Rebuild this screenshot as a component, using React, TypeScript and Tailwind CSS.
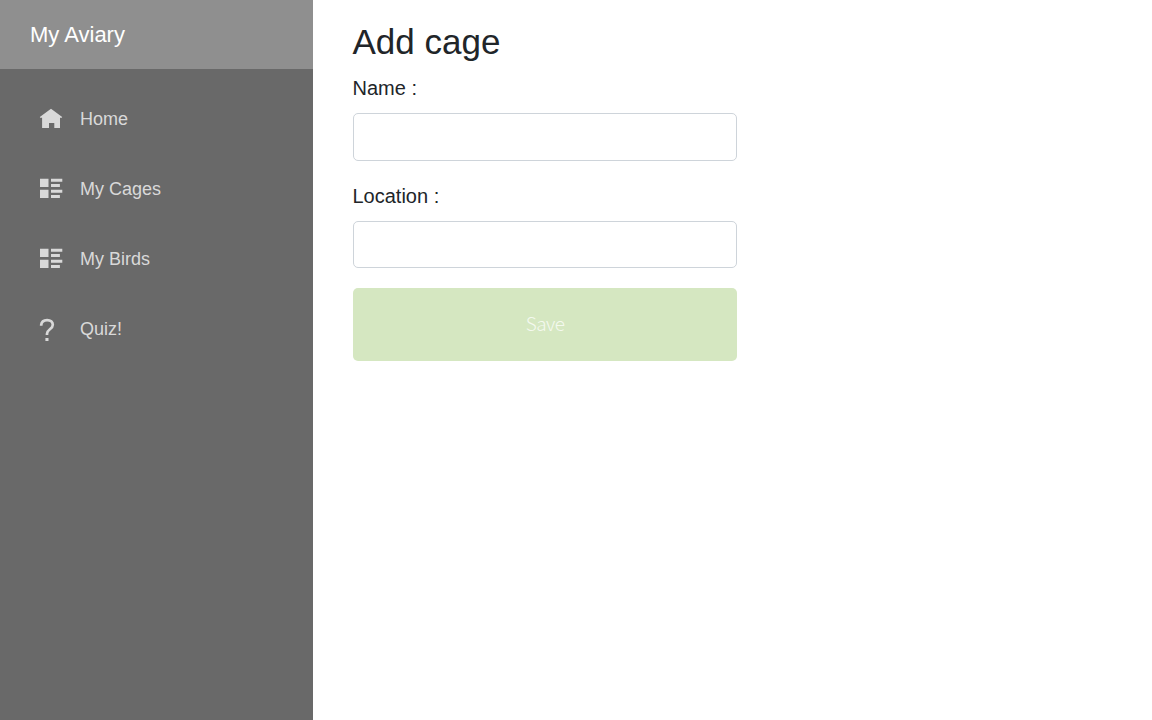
import type { ReactNode } from "react";

function HomeIcon() {
  return (
    <svg width="24" height="24" viewBox="0 0 24 24" fill="currentColor" className="block">
      <path d="M12 1.7 L23.2 9.9 L22.8 10.8 H21 V21 H15.3 V16 H10 V21 H3.1 V10.8 H1.2 L0.8 9.9 Z" />
    </svg>
  );
}

function ListIcon() {
  return (
    <svg width="24" height="24" viewBox="0 0 24 24" fill="currentColor" className="block">
      <path d="M1 1.7H9.5V10H1ZM12 1.7H23.3V4.7H12ZM12 7H20.9V9.9H12ZM1 12.8H9.5V21H1ZM12 12.8H23.3V15.7H12ZM12 18H20.9V21H12Z" />
    </svg>
  );
}

function QuestionIcon() {
  return (
    <svg width="24" height="24" viewBox="0 0 24 24" className="block">
      <path
        d="M2.2 8.8V8C2.5 4.9 4.7 3.1 8.1 3.1C11.6 3.1 13.8 5 13.8 7.8C13.8 9.8 12.6 11 10.9 12.3C9 13.8 8 14.8 8 16.7V17.9"
        fill="none"
        stroke="currentColor"
        strokeWidth="2.7"
      />
      <path d="M6.4 21H9.5V24H6.4Z" fill="currentColor" />
    </svg>
  );
}

function NavItem({ icon, label }: { icon: ReactNode; label: string }) {
  return (
    <a className="flex h-[70px] items-center pl-[39px] text-[18px] text-[#d9d9d9]">
      <span className="mr-[17px] w-6">{icon}</span>
      <span>{label}</span>
    </a>
  );
}

function Field({ label, id, box }: { label: string; id: string; box: string }) {
  return (
    <div className="flex flex-col">
      <label htmlFor={id} className="-ml-[0.5px] mb-[10px] text-[20px] leading-[30px]">
        {label}
      </label>
      <input id={id} className={`${box} w-full rounded-[5px] border border-[#ced4da] bg-white px-4 outline-none`} />
    </div>
  );
}

export default function App() {
  return (
    <div className="flex h-screen overflow-hidden bg-white font-['Liberation_Sans',Arial,sans-serif] text-[#212529]">
      <aside className="w-[313px] shrink-0 bg-[#696969]">
        <div className="flex h-[69px] items-center bg-[#8f8f8f] pl-[30px] text-[22px] text-white">My Aviary</div>
        <nav className="pt-[15px]">
          <NavItem icon={<HomeIcon />} label="Home" />
          <NavItem icon={<ListIcon />} label="My Cages" />
          <NavItem icon={<ListIcon />} label="My Birds" />
          <NavItem icon={<QuestionIcon />} label="Quiz!" />
        </nav>
      </aside>
      <main className="flex-1 pl-10 pt-5">
        <h1 className="-ml-[0.5px] h-[53px] text-[35px] leading-[44px]">Add cage</h1>
        <form className="flex w-96 flex-col">
          <Field id="name" label="Name :" box="h-12" />
          <div className="h-5" />
          <Field id="location" label="Location :" box="h-[47px]" />
          <button
            type="button"
            className="mt-5 h-[73px] rounded-[5px] bg-[#d5e7c1] pb-[2px] font-['Noto_Sans_CJK_SC',sans-serif] text-[19px] font-light tracking-[-0.6px] text-[#f4f9ef]"
          >
            Save
          </button>
        </form>
      </main>
    </div>
  );
}
